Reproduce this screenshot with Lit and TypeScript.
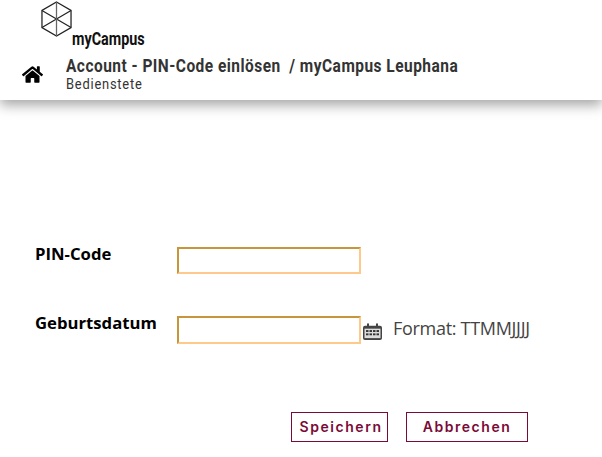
import { LitElement, html, css } from "lit";
import { customElement } from "lit/decorators.js";

@customElement("app-root")
export class AppRoot extends LitElement {
  static styles = css`
    :host { display: block; width: 602px; height: 457px; background: #fff; overflow: hidden; font-family: "Open Sans", sans-serif; }
    header { height: 100px; box-sizing: border-box; background: #fff; box-shadow: 0 5px 12px rgba(0,0,0,0.36); display: flex; flex-direction: column; position: relative; }
    .brand { display: flex; padding: 1px 0 0 41px; height: 48px; box-sizing: border-box; }
    .hex { width: 31px; height: 36px; display: block; }
    .name { font: 700 17.5px/1 Roboto, sans-serif; color: #111; margin: 30px 0 0 0; transform: scaleX(0.82); transform-origin: left top; white-space: nowrap; }
    .crumb { display: flex; align-items: center; padding: 9px 0 0 22px; }
    .home { width: 21px; height: 19px; display: block; margin-right: 23px; }
    .title { font: 700 18px/20px Roboto, sans-serif; color: #333; transform: scaleX(0.86); transform-origin: left top; white-space: pre; letter-spacing: 0.55px; margin-top: -1px; }
    .sub { font: 400 14px/16px Roboto, sans-serif; color: #333; letter-spacing: 0.85px; transform: scaleX(0.92); transform-origin: left top; }
    form { padding: 147px 0 0 35px; display: flex; flex-direction: column; gap: 42px; }
    .row { display: flex; align-items: flex-start; height: 27px; }
    label { width: 142px; font: 700 16.7px/22px "Open Sans", sans-serif; color: #000; margin-top: -4px; }
    input { width: 184px; height: 27px; box-sizing: border-box; border-style: solid; border-width: 2px; border-color: #c8963a #ffc98c #ffc98c #c8963a; background: #fff; padding: 0; margin: 0; outline: none; }
    .row.second input { height: 28px; }
    .cal { width: 19px; height: 17px; display: block; margin: 7px 0 0 2px; }
    .fmt { font: 400 18px/22px "Open Sans", sans-serif; color: #444; margin: 1px 0 0 11px; letter-spacing: -0.3px; white-space: nowrap; }
    .actions { display: flex; gap: 18px; margin-top: 27px; padding-left: 256px; }
    button { height: 30px; box-sizing: border-box; background: #fff; border: 1px solid #7a0a36; color: #7a0a36; font: 600 14px/1 Inter, sans-serif; letter-spacing: 1.55px; padding: 0; }
    .save { width: 97px; padding-left: 3px; }
    .cancel { width: 122px; }
  `;

  render() {
    return html`
      <header>
        <div class="brand">
          <svg class="hex" viewBox="0 0 32 36" fill="none" stroke="#222" stroke-width="1.3" preserveAspectRatio="none">
            <path d="M16 1 L31 9.5 V26.5 L16 35 L1 26.5 V9.5 Z" />
            <path d="M1 9.5 L31 26.5 M31 9.5 L1 26.5" />
            <path d="M16 1 V35" stroke="#666" />
          </svg>
          <div class="name">myCampus</div>
        </div>
        <div class="crumb">
          <svg class="home" viewBox="0 0 576 512" fill="#000">
            <path d="M280.4 148.3 96 300.1V464a16 16 0 0 0 16 16l112.100-.3a16 16 0 0 0 15.900-16V368a16 16 0 0 1 16-16h64a16 16 0 0 1 16 16v95.600a16 16 0 0 0 16 16.100L464 480a16 16 0 0 0 16-16V300L295.700 148.300a12.200 12.200 0 0 0-15.300 0zM571.600 251.500 488 182.600V44.100a12 12 0 0 0-12-12h-56a12 12 0 0 0-12 12v72.600L318.500 43a48 48 0 0 0-61 0L4.300 251.500a12 12 0 0 0-1.600 16.900l25.500 31A12 12 0 0 0 45.200 301l235.200-193.700a12.200 12.200 0 0 1 15.300 0L530.900 301a12 12 0 0 0 16.900-1.600l25.500-31a12 12 0 0 0-1.700-16.900z"/>
          </svg>
          <div>
            <div class="title">Account - PIN-Code einlösen  / myCampus Leuphana</div>
            <div class="sub">Bedienstete</div>
          </div>
        </div>
      </header>
      <form>
        <div class="row">
          <label>PIN-Code</label>
          <input type="text" />
        </div>
        <div class="row second">
          <label>Geburtsdatum</label>
          <input type="text" />
          <svg class="cal" viewBox="0 0 19 18" preserveAspectRatio="none">
            <path fill="#444" d="M2 3h15a2 2 0 0 1 2 2v11a2 2 0 0 1-2 2H2a2 2 0 0 1-2-2V5a2 2 0 0 1 2-2z"/>
            <rect x="4" y="0.500" width="2" height="4" fill="#444"/>
            <rect x="13" y="0.500" width="2" height="4" fill="#444"/>
            <rect x="1.500" y="6" width="16" height="10" fill="#ddd"/>
            <g fill="#333">
              <rect x="3" y="7.500" width="2.500" height="2"/><rect x="6.500" y="7.500" width="2.500" height="2"/><rect x="10" y="7.500" width="2.500" height="2"/><rect x="13.500" y="7.500" width="2.500" height="2"/>
              <rect x="3" y="11" width="2.500" height="2"/><rect x="6.500" y="11" width="2.500" height="2"/><rect x="10" y="11" width="2.500" height="2"/><rect x="13.500" y="11" width="2.500" height="2"/>
            </g>
          </svg>
          <span class="fmt">Format: TTMMJJJJ</span>
        </div>
        <div class="actions">
          <button type="button" class="save">Speichern</button>
          <button type="button" class="cancel">Abbrechen</button>
        </div>
      </form>
    `;
  }
}
